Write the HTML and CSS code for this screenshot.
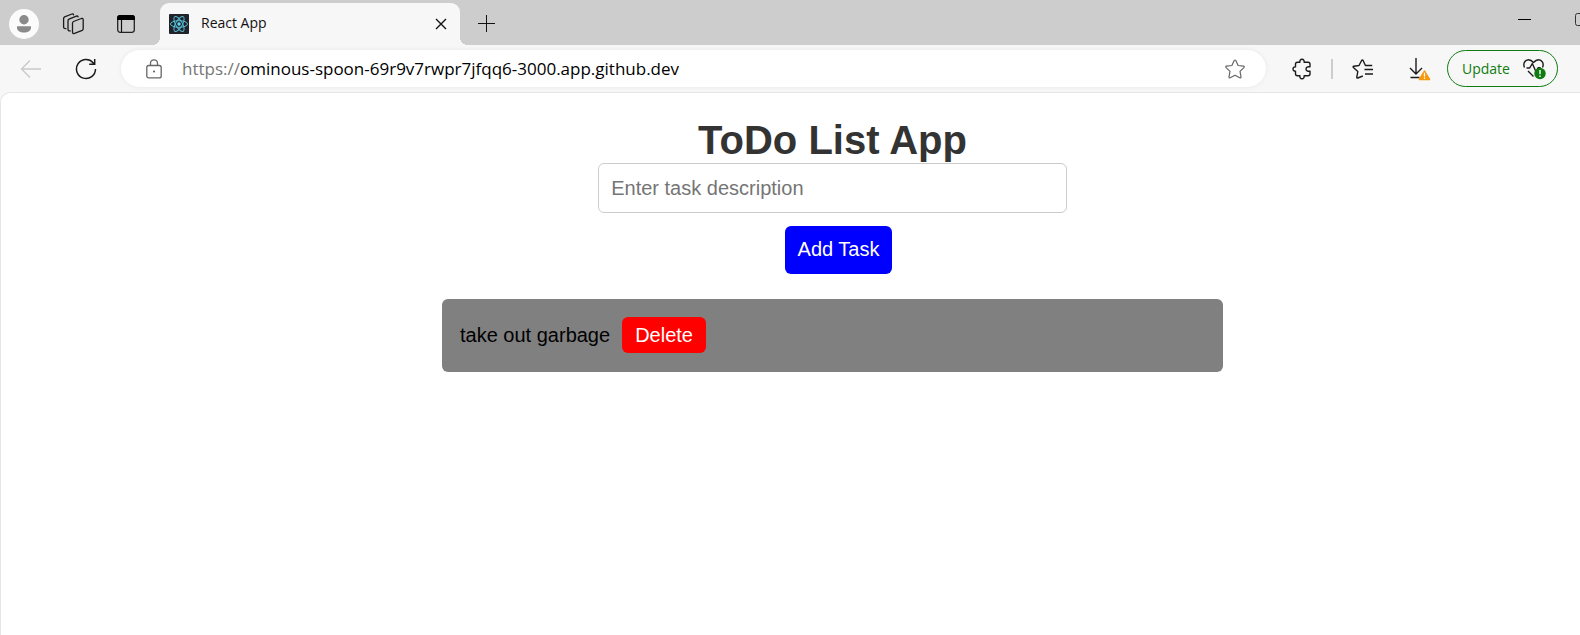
FILE: index.html
```html
<!DOCTYPE html>
<html lang="en">
<head>
<meta charset="utf-8">
<title>React App</title>
<link rel="stylesheet" href="styles.css">
</head>
<body>
<header class="browser">
  <div class="tab-strip">
    <button class="profile" aria-label="Profile">
      <svg width="30" height="30" viewBox="0 0 30 30"><circle cx="15" cy="15" r="15" fill="#fbfbfb"/><circle cx="15" cy="10.800" r="4.700" fill="#8a8a8a"/><path d="M8 17.200h14v1.300c0 3.300-3 5-7 5s-7-1.700-7-5z" fill="#8a8a8a"/></svg>
    </button>
    <button class="strip-button" aria-label="Workspaces">
      <svg width="24" height="24" viewBox="0 -1 24 24" fill="none" stroke="#1b1b1b" stroke-width="1.300" stroke-linejoin="round" stroke-linecap="round"><path d="M11.500 10.200q0-1.200 1-1.700l7.800-3q1.900-.5 1.900 1.400v8.800q0 1.100-1 1.600l-7.700 3.100q-1.900.6-2-1.300z"/><path d="M9.300 17.900q-2.300.3-2.300-1.700V7.800q0-1.200 1-1.700l7.400-3q1.300-.4 1.700.8"/><path d="M4.900 15.600q-2.300.2-2.300-1.700V5.500q0-1.200 1-1.700L10.900 1q1.300-.4 1.700.8"/></svg>
    </button>
    <button class="strip-button strip-button-actions" aria-label="Tab actions">
      <svg width="20" height="20" viewBox="0 0 20 20"><rect x="1.700" y="1.700" width="16.600" height="16.600" rx="2.500" fill="none" stroke="#222" stroke-width="1.300"/><path d="M1 6V4a3 3 0 0 1 3-3h12a3 3 0 0 1 3 3v2z"/><path d="M5.500 6v12" stroke="#111" stroke-width="1.200"/></svg>
    </button>
    <div class="tab">
      <svg class="tab-icon" width="20" height="20" viewBox="0 0 20 20"><rect width="20" height="20" rx="1" fill="#20232a"/><g fill="none" stroke="#56bdd6" stroke-width="1"><ellipse cx="10" cy="10" rx="8.500" ry="3.300"/><ellipse cx="10" cy="10" rx="8.500" ry="3.300" transform="rotate(60 10 10)"/><ellipse cx="10" cy="10" rx="8.500" ry="3.300" transform="rotate(120 10 10)"/></g><circle cx="10" cy="10" r="1.700" fill="#61dafb"/></svg>
      <span class="tab-title">React App</span>
      <button class="tab-close" aria-label="Close tab"><svg width="12" height="12" viewBox="0 0 12 12" stroke="#111" stroke-width="1.400"><path d="M1 1l10 10M11 1L1 11"/></svg></button>
    </div>
    <button class="new-tab" aria-label="New tab"><svg width="17" height="17" viewBox="0 0 17 17" stroke="#111" stroke-width="1"><path d="M8.500 0v17M0 8.500h17"/></svg></button>
    <div class="window-controls">
      <button aria-label="Minimize"><svg width="13" height="13" viewBox="0 0 13 13"><path d="M0 6h13v1H0z"/></svg></button>
      <button aria-label="Maximize"><svg width="13" height="13" viewBox="0 0 13 13" fill="none" stroke="#333"><rect x=".5" y=".5" width="12" height="12" rx="2"/></svg></button>
    </div>
  </div>
  <div class="toolbar">
    <button class="back" aria-label="Back" disabled><svg width="22" height="20" viewBox="0 0 22 20" fill="none" stroke="#c9c9c9" stroke-width="1.300"><path d="M10 1.500L1.500 10l8.500 8.500M1.500 10H21"/></svg></button>
    <button class="reload" aria-label="Refresh"><svg width="22" height="22" viewBox="0 0 22 22" fill="none" stroke="#1b1b1b" stroke-width="1.500"><path d="M20.500 11a9.500 9.500 0 1 1-2.400-6.300l1.300 1.400M19.700 1v5.300h-5.500"/></svg></button>
    <div class="address">
      <svg class="lock" width="16" height="20" viewBox="0 0 16 20" fill="none" stroke="#666" stroke-width="1.300"><rect x=".8" y="6.500" width="14.400" height="12.400" rx="2"/><path d="M4.500 6.500V4.300a3.500 3.500 0 0 1 7 0v2.200"/><circle cx="8" cy="12.500" r="1" fill="#555" stroke="none"/></svg>
      <div class="url" role="textbox" aria-label="Address"><span class="scheme">https://</span>ominous-spoon-69r9v7rwpr7jfqq6-3000.app.github.dev</div>
      <button aria-label="Favorite this page"><svg width="20" height="20" viewBox="0 0 20 20" fill="none" stroke="#666" stroke-width="1.200" stroke-linejoin="round"><path d="M9.200 1.500q.8-1 1.600 0l2.300 5 5.400.7q1.300.3.400 1.400l-3.900 3.800 1 5.500q.1 1.300-1.200.9L10 16.200l-4.800 2.600q-1.300.4-1.200-.9l1-5.500L1.100 8.600q-.9-1.100.4-1.400l5.400-.7z"/></svg></button>
    </div>
    <button class="extensions" aria-label="Extensions"><svg width="20" height="22" viewBox="0 0 20 22" fill="none" stroke="#1b1b1b" stroke-width="1.400" stroke-linejoin="round"><path d="M5.500 4.200h2.400c-.3-1.600.5-3 2.100-3s2.400 1.400 2.100 3H16q2 0 2 2v2.600c-2.400-.4-4 .5-4 2.200s1.600 2.600 4 2.200v2.600q0 2-2 2h-3.900c.3 1.600-.5 3-2.100 3s-2.400-1.400-2.100-3H5.500q-2 0-2-2v-2.700C2 13.300 1 12.400 1 11s1-2.300 2.500-2.100V6.200q0-2 2-2z"/></svg></button>
    <span class="divider"></span>
    <button class="favorites" aria-label="Favorites"><svg width="22" height="20" viewBox="0 0 22 20" fill="none" stroke="#1b1b1b" stroke-width="1.400" stroke-linejoin="round"><path d="M10.800 17l-5 2q-1.100.4-1-.8l1-5.700-4.400-4q-.8-1 .4-1.300l5.200-.7L9.600 1.500q.8-1 1.500 0l2.300 5h6.800M12.500 10.500h8.500M13 15h8"/></svg></button>
    <button class="downloads" aria-label="Downloads"><svg width="22" height="24" viewBox="0 0 22 24"><path d="M7 1v15.500M1 11l6 6 6-6M1.500 20.500h9" fill="none" stroke="#1b1b1b" stroke-width="1.400"/><path d="M15.500 14.200L20.500 22.500H10.500z" fill="#f7980b" stroke="#f7980b" stroke-width="1.600" stroke-linejoin="round"/><path d="M15.500 15.800v3.600M15.500 20.500v1.400" stroke="#fff" stroke-width="1.300"/></svg></button>
    <button class="update">Update<svg width="23" height="22" viewBox="0 0 23 22" fill="none" stroke="#1b1b1b" stroke-width="1.400" stroke-linejoin="round"><path d="M1.500 9.500C-.3 5.500 2 1.700 5.500 1.700c2.200 0 3.600 1.200 5 2.800 1.400-1.600 2.800-2.800 5-2.800 3.500 0 5.800 3.800 4 7.800M3.500 10h3.200l2.600-4.500 3.600 8 2.300-3.900h2.500M5 13l5.500 5.500"/><circle cx="17" cy="15.500" r="5.700" fill="#107c10" stroke="none"/><path d="M17 12v4.200M17 17.500v1.500" stroke="#fff"/></svg></button>
  </div>
</header>
<main class="page">
  <div class="todo">
    <h1>ToDo List App</h1>
    <form class="task-form">
      <input type="text" placeholder="Enter task description" aria-label="Task description">
      <button type="button">Add Task</button>
    </form>
    <ul class="tasks">
      <li><span>take out garbage</span><button type="button">Delete</button></li>
    </ul>
  </div>
</main>
</body>
</html>
```
FILE: styles.css
```css
* { box-sizing: border-box; }
body {
  display: flex;
  flex-direction: column;
  min-height: 100vh;
  margin: 0;
  overflow-x: hidden;
  background: #f7f7f7;
  font-family: "Liberation Sans", Arial, sans-serif;
}
button { padding: 0; border: 0; background: none; font: inherit; }
svg { display: block; flex: none; }

.browser { font-family: "Open Sans", "Noto Sans", sans-serif; }
.tab-strip {
  display: flex;
  align-items: center;
  height: 45px;
  padding: 2px 0 0 9px;
  overflow: hidden;
  background: #cdcdcd;
}
.strip-button { margin-left: 22px; }
.strip-button-actions { margin-left: 31px; }
.tab {
  position: relative;
  display: flex;
  align-items: center;
  align-self: flex-end;
  width: 300px;
  height: 42px;
  margin-left: 24px;
  padding: 0 13px 0 9px;
  border-radius: 9px 9px 0 0;
  background: #f7f7f7;
}
.tab::before, .tab::after {
  content: "";
  position: absolute;
  bottom: 0;
  width: 8px;
  height: 8px;
}
.tab::before { right: 100%; background: radial-gradient(circle at 0 0, #cdcdcd 8px, #f7f7f7 8px); }
.tab::after { left: 100%; background: radial-gradient(circle at 100% 0, #cdcdcd 8px, #f7f7f7 8px); }
.tab-title { flex: 1; margin-left: 12px; font-size: 14px; line-height: 20px; padding-bottom: 2px; color: #111; }
.new-tab { margin-left: 18px; }
.window-controls {
  display: flex;
  gap: 44px;
  margin: 0 -8px 8px auto;
}

.toolbar {
  display: flex;
  align-items: center;
  height: 47px;
  padding: 0 22px 0 20px;
}
.reload { margin-left: 33px; }
.address {
  display: flex;
  flex: 1;
  align-items: center;
  height: 37px;
  margin-left: 24px;
  padding: 0 21px 0 25px;
  border-radius: 19px;
  background: #fff;
  box-shadow: 0 0 4px #e6e6e6;
}
.url { flex: 1; margin-left: 20px; font-size: 17px; color: #000; white-space: nowrap; }
.scheme { color: #767676; }
.extensions { margin-left: 26px; }
.divider { width: 2px; height: 20px; margin: 0 19px; background: #cdcdcd; }
.downloads { margin-left: 35px; }
.update {
  display: flex;
  align-items: center;
  justify-content: space-between;
  width: 111px;
  height: 37px;
  margin-left: 16px;
  padding: 0 11px 0 14px;
  border: 1px solid #107c10;
  border-radius: 19px;
  color: #107c10;
  font-size: 14px;
}

.page {
  flex: 1;
  padding: 25px 0 0 84px;
  border: solid #e5e5e5;
  border-width: 1px 0 0 1px;
  border-radius: 10px 0 0 0;
  background: #fff;
  font-size: 20px;
}
.todo { width: 781px; max-width: 100%; margin: 0 auto; }
h1 {
  margin: 0;
  color: #333;
  font-size: 40px;
  line-height: 45px;
  text-align: center;
}
.task-form {
  display: flex;
  flex-direction: column;
  align-items: center;
  gap: 13px;
}
.task-form input {
  width: 60%;
  height: 50px;
  padding: 12px;
  border: 1px solid #ccc;
  border-radius: 6px;
  font: inherit;
}
.task-form input::placeholder { color: #757575; }
.task-form button {
  margin-left: 12px;
  padding: 12px 13px 14px;
  border-radius: 6px;
  background: #00f;
  color: #fff;
  line-height: 22px;
}
.tasks { margin: 25px 0 0; padding: 0; list-style: none; }
.tasks li {
  display: flex;
  align-items: center;
  gap: 12px;
  padding: 18px 18px 19px;
  border-radius: 6px;
  background: #808080;
  color: #000;
}
.tasks button {
  padding: 6px 13px;
  border-radius: 6px;
  background: #f00;
  color: #fff;
  line-height: 24px;
}
```
